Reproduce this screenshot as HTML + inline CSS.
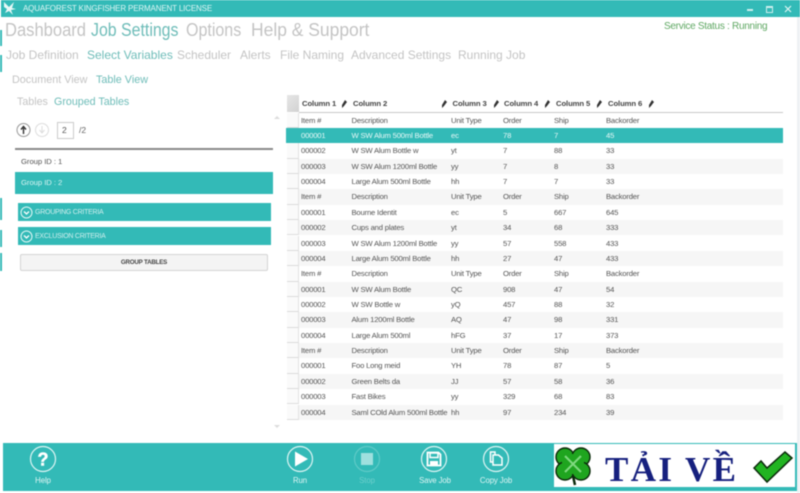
<!DOCTYPE html>
<html><head><meta charset="utf-8">
<style>
html,body{margin:0;padding:0;background:#fff}
#p{position:relative;width:800px;height:493px;overflow:hidden;background:#fff;font-family:"Liberation Sans",sans-serif;filter:blur(.4px)}
.a{position:absolute;white-space:nowrap;line-height:1}
.g{color:#c4c4c4}.t{color:#6fbdb9}
.n{transform-origin:0 0}
.b{position:absolute;background:#33bab7}
.r{position:absolute;left:299px;width:484px;height:15.37px;font-size:7.7px;letter-spacing:-.2px;color:#555;line-height:16.6px}
.r span{position:absolute;white-space:nowrap;top:0}
.r span:nth-child(1){left:2px}.r span:nth-child(2){left:52.5px}.r span:nth-child(3){left:152px}.r span:nth-child(4){left:204px}.r span:nth-child(5){left:255px}.r span:nth-child(6){left:307px}
.z{background:#f6f6f6}
.s{background:#33bab7;color:#e8f8f7;left:286px;width:497px}
.s span:nth-child(1){left:15px}.s span:nth-child(2){left:65.5px}.s span:nth-child(3){left:165px}.s span:nth-child(4){left:217px}.s span:nth-child(5){left:268px}.s span:nth-child(6){left:320px}
.h{position:absolute;left:287px;width:12px;height:15.37px;background:#fafafa;border-bottom:1px solid #dcdcdc;box-sizing:border-box;border-right:1px solid #e2e2e2}
.c{position:absolute;top:98.5px;font-size:7.7px;letter-spacing:-.1px;font-weight:bold;color:#444;white-space:nowrap}
.pen{position:absolute;top:100px;width:6px;height:8px}
.l{position:absolute;top:475.5px;font-size:7.8px;letter-spacing:-.1px;color:#dff5f4;white-space:nowrap;transform:translateX(-50%)}
</style></head><body><div id="p">

<!-- title bar -->
<div class="b" style="left:1px;top:0;width:799px;height:17px"></div>
<svg class="a" style="left:3px;top:1px" width="14" height="15" viewBox="0 0 14 15"><path d="M1 1 L6 6 L11 1 L9 7 L13 8 L8 9 L10 14 L6 10 L2 12 L4 8 L1 6 Z" fill="#e8f8f7"/></svg>
<div class="a" style="left:23px;top:5px;font-size:8px;letter-spacing:-.15px;color:#dff5f4">AQUAFOREST KINGFISHER PERMANENT LICENSE</div>
<div class="a" style="left:747px;top:9px;width:6px;height:2px;background:#cdeeed"></div>
<div class="a" style="left:766px;top:6px;width:5px;height:4px;border:1px solid #cdeeed;border-top-width:2px"></div>
<svg class="a" style="left:784px;top:5px" width="8" height="8" viewBox="0 0 8 8"><path d="M1 1 L7 7 M7 1 L1 7" stroke="#dff5f4" stroke-width="1.2"/></svg>

<!-- left edge artifacts -->
<div class="b" style="left:0;top:30px;width:1.5px;height:16px"></div>
<div class="b" style="left:0;top:55px;width:1.5px;height:17px"></div>
<div class="b" style="left:0;top:198px;width:1.5px;height:22px"></div>
<div class="b" style="left:0;top:230px;width:1.5px;height:17px"></div>
<div class="b" style="left:0;top:253px;width:1.5px;height:18px"></div>
<div class="a" style="left:797px;top:17px;width:3px;height:476px;background:#eef1f4"></div>

<!-- nav -->
<div class="a g n" style="left:5px;top:21px;font-size:18px;transform:scaleX(.92)">Dashboard</div>
<div class="a t n" style="left:91px;top:21px;font-size:18px;transform:scaleX(.883)">Job Settings</div>
<div class="a g n" style="left:186px;top:21px;font-size:18px;transform:scaleX(.89)">Options</div>
<div class="a g n" style="left:251px;top:21px;font-size:18px;transform:scaleX(.97)">Help &amp; Support</div>
<div class="a" style="left:664px;top:22px;font-size:10px;letter-spacing:-.28px;color:#5fa863">Service Status : Running</div>

<div class="a g" style="left:6px;top:49px;font-size:12px">Job Definition</div>
<div class="a t" style="left:87px;top:49px;font-size:12px">Select Variables</div>
<div class="a g" style="left:177px;top:49px;font-size:12px">Scheduler</div>
<div class="a g" style="left:240px;top:49px;font-size:12px">Alerts</div>
<div class="a g" style="left:280px;top:49px;font-size:12px">File Naming</div>
<div class="a g" style="left:351px;top:49px;font-size:12px">Advanced Settings</div>
<div class="a g" style="left:458px;top:49px;font-size:12px">Running Job</div>

<div class="a g" style="left:12px;top:75px;font-size:10.8px">Document View</div>
<div class="a t" style="left:96px;top:75px;font-size:10.8px">Table View</div>
<div class="a g" style="left:17px;top:96.5px;font-size:10.7px">Tables</div>
<div class="a t" style="left:54px;top:96.5px;font-size:10.7px">Grouped Tables</div>

<!-- pager -->
<svg class="a" style="left:16px;top:122px" width="34" height="16" viewBox="0 0 34 16">
<circle cx="7.5" cy="8" r="6.5" fill="none" stroke="#999"/><path d="M7.5 12 V6 M5 7.5 L7.5 4.5 L10 7.5" stroke="#333" stroke-width="1.4" fill="none"/>
<circle cx="26" cy="8" r="6.5" fill="none" stroke="#ddd"/><path d="M26 4 V10 M23.5 8 L26 11 L28.5 8" stroke="#ddd" stroke-width="1" fill="none"/></svg>
<div class="a" style="left:57px;top:122px;width:15px;height:15px;border:1px solid #ccc;font-size:8.5px;color:#555;line-height:15px;text-indent:4px">2</div>
<div class="a" style="left:79px;top:126px;font-size:8.5px;color:#666">/2</div>
<div class="a" style="left:15px;top:148px;width:258px;height:1.5px;background:#8a8a8a"></div>
<div class="a" style="left:21px;top:157.5px;font-size:7.7px;letter-spacing:-.05px;color:#555">Group ID : 1</div>
<div class="b" style="left:15px;top:172px;width:258px;height:21.5px"></div>
<div class="a" style="left:21px;top:179px;font-size:7.7px;letter-spacing:-.05px;color:#d8f3f2">Group ID : 2</div>

<div class="b" style="left:18px;top:203px;width:252.5px;height:18px"></div>
<svg class="a" style="left:20px;top:206px" width="13" height="13" viewBox="0 0 13 13"><circle cx="6.5" cy="6.5" r="5.5" fill="none" stroke="#e4f7f6"/><path d="M4 5.5 L6.5 8 L9 5.5" fill="none" stroke="#fff" stroke-width="1.3"/></svg>
<div class="a" style="left:35px;top:208.5px;font-size:7px;letter-spacing:-.25px;color:#cfeeed">GROUPING CRITERIA</div>
<div class="b" style="left:18px;top:227px;width:252.5px;height:18px"></div>
<svg class="a" style="left:20px;top:230px" width="13" height="13" viewBox="0 0 13 13"><circle cx="6.5" cy="6.5" r="5.5" fill="none" stroke="#e4f7f6"/><path d="M4 5.5 L6.5 8 L9 5.5" fill="none" stroke="#fff" stroke-width="1.3"/></svg>
<div class="a" style="left:35px;top:232.5px;font-size:7px;letter-spacing:-.25px;color:#cfeeed">EXCLUSION CRITERIA</div>
<div class="a" style="left:20px;top:254px;width:246px;height:15px;background:#f4f4f4;border:1px solid #d4d4d4;border-radius:2px;font-size:6.2px;letter-spacing:-.2px;font-weight:bold;color:#444;text-align:center;line-height:15px">GROUP TABLES</div>

<div class="a" style="left:274px;top:116px;width:0;height:0;border-left:3px solid transparent;border-right:3px solid transparent;border-bottom:3px solid #ddd"></div>
<div class="a" style="left:274px;top:425px;width:0;height:0;border-left:3px solid transparent;border-right:3px solid transparent;border-top:3px solid #ddd"></div>

<!-- table head -->
<div class="a" style="left:287px;top:95px;width:12px;height:17px;background:linear-gradient(135deg,#e6e6e6,#d2d2d2)"></div>
<div class="a" style="left:299px;top:111.5px;width:484px;height:1.5px;background:#c8c8c8"></div>
<div class="c" style="left:302px">Column 1</div><div class="c" style="left:353px">Column 2</div><div class="c" style="left:452.5px">Column 3</div><div class="c" style="left:504px">Column 4</div><div class="c" style="left:556px">Column 5</div><div class="c" style="left:608px">Column 6</div>
<svg class="pen" style="left:341px" viewBox="0 0 6 8"><path d="M4 0 L6 2 L3 6 L1 8 L1 5 Z" fill="#333"/></svg>
<svg class="pen" style="left:441px" viewBox="0 0 6 8"><path d="M4 0 L6 2 L3 6 L1 8 L1 5 Z" fill="#333"/></svg>
<svg class="pen" style="left:493px" viewBox="0 0 6 8"><path d="M4 0 L6 2 L3 6 L1 8 L1 5 Z" fill="#333"/></svg>
<svg class="pen" style="left:544px" viewBox="0 0 6 8"><path d="M4 0 L6 2 L3 6 L1 8 L1 5 Z" fill="#333"/></svg>
<svg class="pen" style="left:596px" viewBox="0 0 6 8"><path d="M4 0 L6 2 L3 6 L1 8 L1 5 Z" fill="#333"/></svg>
<svg class="pen" style="left:648px" viewBox="0 0 6 8"><path d="M4 0 L6 2 L3 6 L1 8 L1 5 Z" fill="#333"/></svg>

<!-- row headers -->
<div class="h" style="top:112.5px"></div><div class="h" style="top:143.2px"></div><div class="h" style="top:158.6px"></div><div class="h" style="top:174px"></div><div class="h" style="top:189.4px"></div><div class="h" style="top:204.7px"></div><div class="h" style="top:220.1px"></div><div class="h" style="top:235.5px"></div><div class="h" style="top:250.8px"></div><div class="h" style="top:266.2px"></div><div class="h" style="top:281.6px"></div><div class="h" style="top:296.9px"></div><div class="h" style="top:312.3px"></div><div class="h" style="top:327.7px"></div><div class="h" style="top:343px"></div><div class="h" style="top:358.4px"></div><div class="h" style="top:373.8px"></div><div class="h" style="top:389.1px"></div><div class="h" style="top:404.5px"></div>

<!-- rows -->
<div class="r" style="top:112.5px"><span>Item #</span><span>Description</span><span>Unit Type</span><span>Order</span><span>Ship</span><span>Backorder</span></div>
<div class="r s" style="top:127.9px"><span>000001</span><span>W SW Alum 500ml Bottle</span><span>ec</span><span>78</span><span>7</span><span>45</span></div>
<div class="r" style="top:143.2px"><span>000002</span><span>W SW Alum Bottle w</span><span>yt</span><span>7</span><span>88</span><span>33</span></div>
<div class="r z" style="top:158.6px"><span>000003</span><span>W SW Alum 1200ml Bottle</span><span>yy</span><span>7</span><span>8</span><span>33</span></div>
<div class="r" style="top:174px"><span>000004</span><span>Large Alum 500ml Bottle</span><span>hh</span><span>7</span><span>7</span><span>33</span></div>
<div class="r z" style="top:189.4px"><span>Item #</span><span>Description</span><span>Unit Type</span><span>Order</span><span>Ship</span><span>Backorder</span></div>
<div class="r" style="top:204.7px"><span>000001</span><span>Bourne Identit</span><span>ec</span><span>5</span><span>667</span><span>645</span></div>
<div class="r z" style="top:220.1px"><span>000002</span><span>Cups and plates</span><span>yt</span><span>34</span><span>68</span><span>333</span></div>
<div class="r" style="top:235.5px"><span>000003</span><span>W SW Alum 1200ml Bottle</span><span>yy</span><span>57</span><span>558</span><span>433</span></div>
<div class="r z" style="top:250.8px"><span>000004</span><span>Large Alum 500ml Bottle</span><span>hh</span><span>27</span><span>47</span><span>433</span></div>
<div class="r" style="top:266.2px"><span>Item #</span><span>Description</span><span>Unit Type</span><span>Order</span><span>Ship</span><span>Backorder</span></div>
<div class="r z" style="top:281.6px"><span>000001</span><span>W SW Alum Bottle</span><span>QC</span><span>908</span><span>47</span><span>54</span></div>
<div class="r" style="top:296.9px"><span>000002</span><span>W SW Bottle w</span><span>yQ</span><span>457</span><span>88</span><span>32</span></div>
<div class="r z" style="top:312.3px"><span>000003</span><span>Alum 1200ml Bottle</span><span>AQ</span><span>47</span><span>98</span><span>331</span></div>
<div class="r" style="top:327.7px"><span>000004</span><span>Large Alum 500ml</span><span>hFG</span><span>37</span><span>17</span><span>373</span></div>
<div class="r z" style="top:343px"><span>Item #</span><span>Description</span><span>Unit Type</span><span>Order</span><span>Ship</span><span>Backorder</span></div>
<div class="r" style="top:358.4px"><span>000001</span><span>Foo Long meid</span><span>YH</span><span>78</span><span>87</span><span>5</span></div>
<div class="r z" style="top:373.8px"><span>000002</span><span>Green Belts da</span><span>JJ</span><span>57</span><span>58</span><span>36</span></div>
<div class="r" style="top:389.1px"><span>000003</span><span>Fast Bikes</span><span>yy</span><span>329</span><span>68</span><span>83</span></div>
<div class="r z" style="top:404.5px"><span>000004</span><span>Saml COld Alum 500ml Bottle</span><span>hh</span><span>97</span><span>234</span><span>39</span></div>

<!-- bottom bar -->
<div class="b" style="left:3px;top:442.5px;width:794px;height:48.5px"></div>
<svg class="a" style="left:28px;top:444px" width="30" height="30" viewBox="0 0 30 30"><circle cx="15" cy="15" r="12.5" fill="none" stroke="#dff5f4" stroke-width="1.2"/><text x="15" y="21.5" font-family="Liberation Sans" font-weight="bold" font-size="18" fill="#fff" stroke="#fff" stroke-width=".5" text-anchor="middle">?</text></svg>
<div class="l" style="left:43px">Help</div>
<svg class="a" style="left:285px;top:444px" width="30" height="30" viewBox="0 0 30 30"><circle cx="15" cy="15" r="12.5" fill="none" stroke="#dff5f4" stroke-width="1.2"/><path d="M10 7.5 L23 15 L10 22.5 Z" fill="#fff"/></svg>
<div class="l" style="left:300px">Run</div>
<svg class="a" style="left:352px;top:444px" width="30" height="30" viewBox="0 0 30 30"><circle cx="15" cy="15" r="12.5" fill="none" stroke="#5fcac7" stroke-width="1.2"/><rect x="9" y="9" width="12" height="12" fill="#9fe0de"/></svg>
<div class="l" style="left:367px;color:#6ccfcc">Stop</div>
<svg class="a" style="left:419px;top:444px" width="30" height="30" viewBox="0 0 30 30"><circle cx="15" cy="15" r="12.5" fill="none" stroke="#dff5f4" stroke-width="1.2"/><path d="M8.5 8.5 H19.5 L21.5 10.5 V21.5 H8.5 Z" fill="none" stroke="#fff" stroke-width="1.8"/><path d="M11 9 H19 V13.5 H11 Z" fill="none" stroke="#fff" stroke-width="1.5"/><rect x="11" y="17" width="8" height="4.5" fill="#fff"/></svg>
<div class="l" style="left:435px">Save Job</div>
<svg class="a" style="left:481px;top:444px" width="30" height="30" viewBox="0 0 30 30"><circle cx="15" cy="15" r="12.5" fill="none" stroke="#dff5f4" stroke-width="1.2"/><path d="M9.5 8 H14 V18 H9.5 Z" fill="none" stroke="#fff" stroke-width="1.5"/><path d="M12 11 H17.5 L21 14 V21 H12 Z" fill="#33bab7" stroke="#fff" stroke-width="1.5"/></svg>
<div class="l" style="left:496px">Copy Job</div>

<!-- overlay banner -->
<div class="a" style="left:554px;top:444px;width:241px;height:43px;background:#fff"></div>
<svg class="a" style="left:554px;top:444px" width="40" height="43" viewBox="0 0 40 43">
<path d="M19 32 L21 41" stroke="#0b2a0b" stroke-width="2.5"/>
<g fill="#1fa51f" stroke="#0b2a0b" stroke-width="1.4">
<circle cx="11" cy="13" r="9"/><circle cx="27" cy="13" r="9"/><circle cx="11" cy="27" r="9"/><circle cx="27" cy="27" r="9"/></g>
<rect x="8" y="10" width="22" height="20" fill="#1fa51f"/>
<path d="M19 20 L11 12 M19 20 L27 12 M19 20 L11 28 M19 20 L27 28" stroke="#7fd97f" stroke-width="2"/></svg>
<div class="a" style="left:605px;top:451.7px;font-family:'Liberation Serif','Noto Serif CJK SC',serif;font-weight:bold;font-size:35px;color:#16207e;letter-spacing:2.4px">TẢI VỀ</div>
<svg class="a" style="left:752px;top:450px" width="42" height="34" viewBox="0 0 42 34"><path d="M2 18 L9 11 L15 18 L33 2 L40 8 L15 32 Z" fill="#22b422" stroke="#0b2a0b" stroke-width="1.5"/></svg>
</div></body></html>
